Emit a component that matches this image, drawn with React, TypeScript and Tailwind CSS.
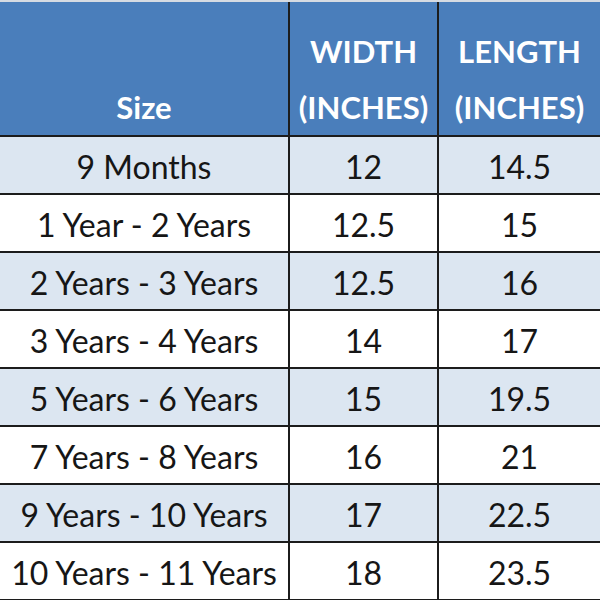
import React from 'react';

interface SizeRow {
  size: string;
  width: string;
  length: string;
}

const rows: SizeRow[] = [
  { size: '9 Months', width: '12', length: '14.5' },
  { size: '1 Year - 2 Years', width: '12.5', length: '15' },
  { size: '2 Years - 3 Years', width: '12.5', length: '16' },
  { size: '3 Years - 4 Years', width: '14', length: '17' },
  { size: '5 Years - 6 Years', width: '15', length: '19.5' },
  { size: '7 Years - 8 Years', width: '16', length: '21' },
  { size: '9 Years - 10 Years', width: '17', length: '22.5' },
  { size: '10 Years - 11 Years', width: '18', length: '23.5' },
];

const App: React.FC = () => {
  return (
    <div
      className="w-[600px] h-[600px] overflow-hidden bg-white text-[#161616]"
      style={{ fontFamily: 'Lato, "Open Sans", sans-serif' }}
    >
      {/* header */}
      <div className="grid grid-cols-[290px_149px_1fr] h-[137px] bg-[#4a7ebb] border-t-2 border-[#d6dbe2] border-b-2 border-b-[#1c1c1c] text-white font-bold text-[31px] leading-[56px]">
        <div className="flex items-end justify-center border-r-2 border-[#1c1c1c] pb-0">
          Size
        </div>
        <div className="flex flex-col items-center justify-end border-r-2 border-[#1c1c1c]">
          <span>WIDTH</span>
          <span>(INCHES)</span>
        </div>
        <div className="flex flex-col items-center justify-end">
          <span>LENGTH</span>
          <span>(INCHES)</span>
        </div>
      </div>

      {rows.map((row, i) => (
        <div
          key={row.size}
          className={`grid grid-cols-[290px_149px_1fr] h-[58px] border-b-2 border-[#1c1c1c] text-[32px] ${
            i % 2 === 0 ? 'bg-[#dce6f1]' : 'bg-white'
          }`}
        >
          <div className="flex items-center justify-center border-r-2 border-[#1c1c1c] pt-1">
            {row.size}
          </div>
          <div className="flex items-center justify-center border-r-2 border-[#1c1c1c] pt-1">
            {row.width}
          </div>
          <div className="flex items-center justify-center pt-1">{row.length}</div>
        </div>
      ))}
    </div>
  );
};

export default App;
